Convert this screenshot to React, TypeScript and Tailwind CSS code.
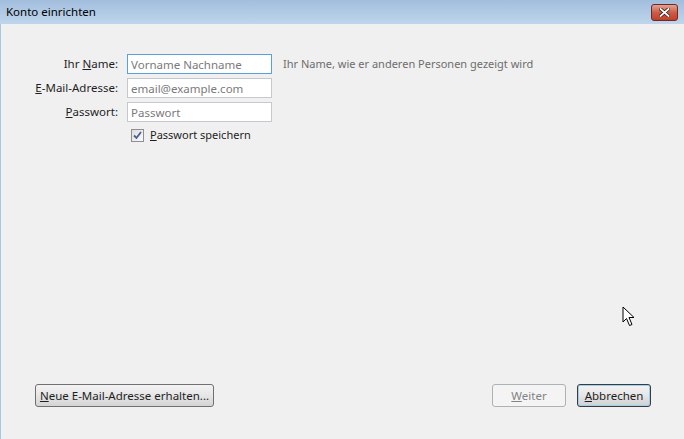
import React, { useState } from 'react';

const font = { fontFamily: '"Noto Sans", "Open Sans", sans-serif' };

const Cursor: React.FC = () => (
  <svg className="absolute left-[622px] top-[306px]" width="14" height="22" viewBox="0 0 14 22">
    <path d="M1 1 L1 16 L4.5 12.5 L7.5 19.5 L10 18.5 L7 11.5 L12 11.5 Z" fill="#fff" stroke="#000" strokeWidth="1" strokeLinejoin="round" />
  </svg>
);

const App: React.FC = () => {
  const [name, setName] = useState('');
  const [email, setEmail] = useState('');
  const [password, setPassword] = useState('');
  const [remember, setRemember] = useState(true);

  const inputClass =
    'ml-[9px] h-5 w-[145px] bg-white border px-[3px] text-[11.5px] text-[#222] placeholder:text-[#7a7a7a] outline-none';

  return (
    <div style={font} className="relative w-[684px] h-[439px] overflow-hidden bg-[#f0f0f0] text-[11.5px] text-[#1e1e1e]">
      {/* title bar */}
      <div className="h-6 flex items-center justify-between pl-[6px] pr-[6px] bg-gradient-to-b from-[#a2bedd] to-[#bfd5ec]">
        <span className="text-[11.5px] text-black leading-none">Konto einrichten</span>
        <button className="w-[27px] h-[17px] rounded-[3px] border border-[#6b2b22] bg-gradient-to-b from-[#e0a295] via-[#cf5b45] to-[#c23f2a] flex items-center justify-center">
          <svg width="11" height="9" viewBox="0 0 11 9">
            <path d="M1.5 1 L9.5 8 M9.5 1 L1.5 8" stroke="#3a1a16" strokeWidth="3.4" strokeLinecap="square" />
            <path d="M1.5 1 L9.5 8 M9.5 1 L1.5 8" stroke="#fff" strokeWidth="1.8" strokeLinecap="square" />
          </svg>
        </button>
      </div>

      {/* client area */}
      <div className="h-[415px] border-l border-[#a9c6e6] flex flex-col">
        <div className="pt-[30px] grid grid-cols-[117px_154px_1fr] gap-y-1 items-center">
          <label className="text-right">
            Ihr <span className="underline">N</span>ame:
          </label>
          <input
            className={inputClass + ' border-[#5a9fe0]'}
            placeholder="Vorname Nachname"
            value={name}
            onChange={(e) => setName(e.target.value)}
          />
          <span className="pl-[11px] text-[11px] text-[#6d6d6d]">Ihr Name, wie er anderen Personen gezeigt wird</span>

          <label className="text-right">
            <span className="underline">E</span>-Mail-Adresse:
          </label>
          <input
            className={inputClass + ' border-[#c5c9cf]'}
            placeholder="email@example.com"
            value={email}
            onChange={(e) => setEmail(e.target.value)}
          />
          <span />

          <label className="text-right">
            <span className="underline">P</span>asswort:
          </label>
          <input
            type="password"
            className={inputClass + ' border-[#c5c9cf]'}
            placeholder="Passwort"
            value={password}
            onChange={(e) => setPassword(e.target.value)}
          />
          <span />
        </div>

        <label className="mt-[5px] ml-[130px] flex items-center gap-[6px] cursor-default" onClick={() => setRemember(!remember)}>
          <span className="w-[13px] h-[13px] border border-[#8f8f8f] bg-gradient-to-br from-[#dcdcdc] to-[#fbfbfb] flex items-center justify-center">
            {remember && (
              <svg width="9" height="9" viewBox="0 0 9 9">
                <path d="M1 4.5 L3.5 7 L8 1" fill="none" stroke="#4a5f97" strokeWidth="1.8" />
              </svg>
            )}
          </span>
          <span className="text-[11px]">
            <span className="underline">P</span>asswort speichern
          </span>
        </label>

        <div className="flex-1" />

        <div className="flex items-center pl-[34px] pr-[33px] pb-[32px]">
          <button className="h-[23px] w-[179px] rounded-[3px] border border-[#707070] bg-gradient-to-b from-[#f3f3f3] via-[#e6e6e6] to-[#d4d4d4] text-[11.5px]">
            <span className="underline">N</span>eue E-Mail-Adresse erhalten...
          </button>
          <div className="flex-1" />
          <button disabled className="h-[23px] w-[74px] rounded-[3px] border border-[#adb2b5] bg-[#f4f4f4] text-[#838383] text-[11.5px]">
            <span className="underline">W</span>eiter
          </button>
          <button className="ml-[11px] h-[23px] w-[74px] rounded-[3px] border border-[#3c3c3c] bg-gradient-to-b from-[#f3f3f3] via-[#e6e6e6] to-[#d0d0d0] text-[11.5px] shadow-[inset_0_0_0_1px_#9ad0ef]">
            <span className="underline">A</span>bbrechen
          </button>
        </div>
      </div>

      <Cursor />
    </div>
  );
};

export default App;
